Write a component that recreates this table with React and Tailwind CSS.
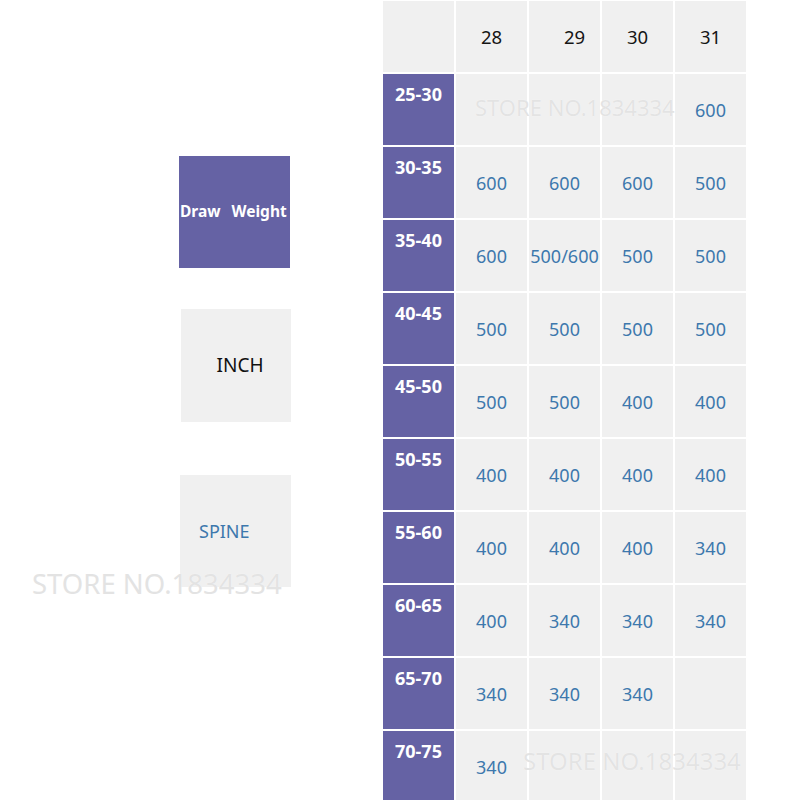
const rows = [
  ["25-30", ["", "", "", "600"]],
  ["30-35", ["600", "600", "600", "500"]],
  ["35-40", ["600", "500/600", "500", "500"]],
  ["40-45", ["500", "500", "500", "500"]],
  ["45-50", ["500", "500", "400", "400"]],
  ["50-55", ["400", "400", "400", "400"]],
  ["55-60", ["400", "400", "400", "340"]],
  ["60-65", ["400", "340", "340", "340"]],
  ["65-70", ["340", "340", "340", ""]],
  ["70-75", ["340", "", "", ""]],
];

const Watermark = ({ className }) => (
  <div
    className={`absolute whitespace-nowrap text-[#e3e3e3] leading-none pointer-events-none ${className}`}
    style={{ textShadow: "0 0 1px #fff" }}
  >
    STORE NO.1834334
  </div>
);

export default function App() {
  return (
    <div className="relative w-[800px] h-[800px] bg-white overflow-hidden font-['Noto_Sans',sans-serif] flex">
      {/* left legend boxes */}
      <div className="w-[383px] flex flex-col pl-[179px] pt-[156px]">
        <div className="w-[111px] h-[112px] bg-[#6562a4] flex items-center pl-[1px] gap-[11px] text-white font-bold text-[15.5px]">
          <span>Draw</span>
          <span>Weight</span>
        </div>
        <div className="mt-[41px] ml-[2px] w-[110px] h-[113px] bg-[#f0f0f0] flex items-center justify-center pl-[8px] text-[19px] text-[#111]">
          INCH
        </div>
        <div className="mt-[53px] ml-[1px] w-[111px] h-[112px] bg-[#f0f0f0] flex items-center pl-[19px] text-[18px] text-[#3d78ad]">
          SPINE
        </div>
      </div>

      {/* table */}
      <div className="pt-[1px]">
        <div className="grid grid-cols-[71px_71px_71px_71px_71px] auto-rows-[71px] gap-[2px]">
          <div className="bg-[#f0f0f0]" />
          {["28", "29", "30", "31"].map((h) => (
            <div
              key={h}
              className={`bg-[#f0f0f0] flex items-center justify-center text-[18.5px] text-[#151515] ${h === "29" ? "pl-[20px]" : ""}`}
            >
              {h}
            </div>
          ))}
          {rows.map(([label, vals]) => (
            <div key={label} className="contents">
              <div className="bg-[#6562a4] flex justify-center pt-[8px] text-white font-bold text-[18px] leading-[24px]">
                {label}
              </div>
              {vals.map((v, i) => (
                <div
                  key={i}
                  className="bg-[#f0f0f0] flex items-center justify-center pt-[2px] text-[18px] text-[#3d78ad]"
                >
                  {v}
                </div>
              ))}
            </div>
          ))}
        </div>
      </div>

      <Watermark className="left-[32px] top-[570px] text-[27.5px]" />
      <Watermark className="left-[475px] top-[96px] text-[22px]" />
      <Watermark className="left-[523px] top-[749px] text-[24px]" />
    </div>
  );
}
